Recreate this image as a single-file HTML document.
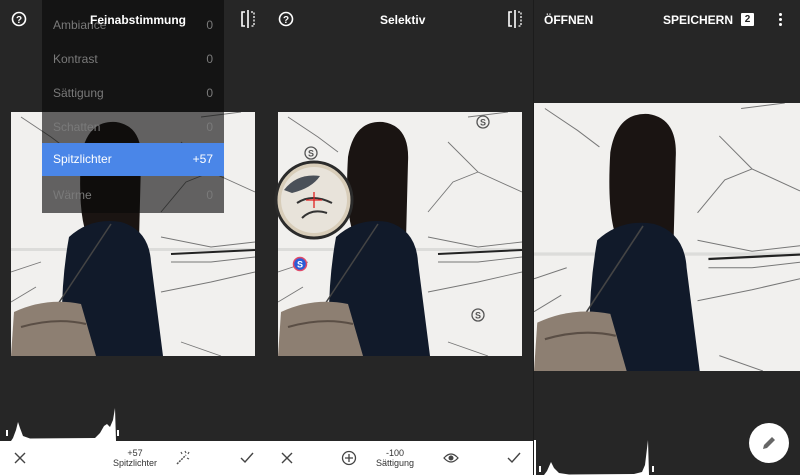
<!DOCTYPE html>
<html><head><meta charset="utf-8"><style>
*{margin:0;padding:0;box-sizing:border-box}
body{width:800px;height:475px;background:#262626;position:relative;overflow:hidden;font-family:"Liberation Sans",sans-serif;color:#fff}
.abs{position:absolute}
.t{font-size:12px;font-weight:bold;}
.menu{left:42px;top:0;width:182px;height:213px;background:rgba(10,10,10,0.62)}
.row{position:absolute;left:11px;right:11px;font-size:12px;color:#7a7a7a;display:flex;justify-content:space-between}
.bar{top:441px;height:34px;background:#fff}
.lbl{font-size:9px;color:#333;text-align:center;line-height:10px}
</style></head><body>

<svg width="0" height="0" style="position:absolute">
<defs>
<g id="photo">
<rect width="244" height="244" fill="#f1f0ee"/>
<rect x="0" y="136" width="244" height="3" fill="#dcdcda"/>
<path d="M10 5 L40 25 L60 40 M170 30 L200 60 L244 80 M150 100 L175 70 L200 60 M150 125 L200 135 L244 130 M160 150 L200 150 L244 145 M150 180 L200 170 L244 160 M170 230 L210 244 M0 160 L30 150 M0 190 L25 175 M190 5 L230 0" stroke="#777" stroke-width="0.9" fill="none"/>
<path d="M160 142 L244 138" stroke="#222" stroke-width="2" fill="none"/>
<path d="M70 45 Q76 8 105 10 Q132 14 130 50 L128 128 Q110 138 80 132 Q66 110 70 45Z" fill="#1a1412"/>
<path d="M58 125 Q80 105 110 110 Q138 118 140 150 L152 244 L52 244 Q48 180 58 125Z" fill="#111a2a"/>
<path d="M100 112 L45 195" stroke="#444" stroke-width="1.5"/>
<path d="M3 200 Q35 185 70 192 L85 244 L0 244Z" fill="#8d7f72"/>
<path d="M10 215 Q45 205 75 212" stroke="#5a4e45" stroke-width="2" fill="none"/>
</g>
<g id="S"><circle r="6" fill="none" stroke="#555" stroke-width="1.3"/><text y="3.5" text-anchor="middle" font-size="9" font-weight="bold" fill="#555" font-family="Liberation Sans">S</text></g>
</defs></svg>

<!-- Panel 1 -->
<svg class="abs" style="left:11px;top:112px" width="244" height="244" viewBox="0 0 244 244"><use href="#photo"/></svg>
<div class="abs menu"></div>
<div class="row" style="top:18px;left:53px;width:160px"><span>Ambiance</span><span>0</span></div>
<div class="row" style="top:52px;left:53px;width:160px"><span>Kontrast</span><span>0</span></div>
<div class="row" style="top:86px;left:53px;width:160px"><span>Sättigung</span><span>0</span></div>
<div class="row" style="top:120px;left:53px;width:160px"><span>Schatten</span><span>0</span></div>
<div class="abs" style="left:42px;top:143px;width:182px;height:33px;background:#4a86e8"></div>
<div class="row" style="top:152px;left:53px;width:160px;color:#fff"><span>Spitzlichter</span><span>+57</span></div>
<div class="row" style="top:188px;left:53px;width:160px"><span>Wärme</span><span>0</span></div>
<div class="abs t" style="left:90px;top:13px">Feinabstimmung</div>
<svg class="abs" style="left:11px;top:11px" width="16" height="16"><circle cx="8" cy="8" r="6.5" fill="none" stroke="#fff" stroke-width="1.6"/><text x="8" y="12" text-anchor="middle" font-size="10" font-weight="bold" fill="#fff" font-family="Liberation Sans">?</text></svg>
<svg class="abs" style="left:240px;top:10px" width="16" height="18"><path d="M5 2H2V16H5M8 0V18" stroke="#fff" stroke-width="1.6" fill="none"/><path d="M11 2H14V16H11" stroke="#fff" stroke-width="1.3" stroke-dasharray="2 1.5" fill="none"/></svg>
<svg class="abs" style="left:0;top:400px" width="266" height="41"><polygon points="11,41 13,38 16,30 18,22 20,28 23,36 30,38.5 95,38 100,33 104,26 107,24 110,27 113,20 115,8 116,41" fill="#fff"/><rect x="6" y="30" width="2" height="6" fill="#fff"/><rect x="117" y="30" width="2" height="6" fill="#fff"/></svg>
<div class="abs bar" style="left:0;width:266px"></div>
<svg class="abs" style="left:14px;top:452px" width="12" height="12"><path d="M1 1L11 11M11 1L1 11" stroke="#444" stroke-width="1.4"/></svg>
<div class="abs lbl" style="left:105px;top:448px;width:60px">+57<br>Spitzlichter</div>
<svg class="abs" style="left:175px;top:450px" width="16" height="16"><path d="M2 14L11 5" stroke="#555" stroke-width="1.5" stroke-dasharray="2 1"/><path d="M10 1L11 3M14 2L13 4M14 9L12 8M6 2L7 4" stroke="#555" stroke-width="1.2"/></svg>
<svg class="abs" style="left:240px;top:452px" width="14" height="12"><path d="M1 6L5 10L13 1" stroke="#444" stroke-width="1.4" fill="none"/></svg>

<!-- Panel 2 -->
<svg class="abs" style="left:278px;top:112px" width="244" height="244" viewBox="0 0 244 244"><use href="#photo"/>
<g transform="translate(205,10)"><use href="#S"/></g>
<g transform="translate(33,41)"><use href="#S"/></g>
<g transform="translate(200,203)"><use href="#S"/></g>
<circle cx="22" cy="152" r="6.5" fill="#2a5bd7" stroke="#e04a6a" stroke-width="1.5"/><text x="22" y="155.5" text-anchor="middle" font-size="9" font-weight="bold" fill="#fff" font-family="Liberation Sans">S</text>
</svg>
<svg class="abs" style="left:272px;top:158px" width="84" height="84"><circle cx="42" cy="42" r="38" fill="#d8cdb9" stroke="#2b2b2b" stroke-width="3"/><circle cx="42" cy="42" r="33" fill="#e8e3da"/><path d="M12 32 Q25 15 48 18 Q40 30 20 35Z" fill="#4a5058"/><path d="M25 45 Q40 35 60 45 M30 60 Q40 50 55 55" stroke="#333" stroke-width="2" fill="none"/><path d="M42 34V50M34 42H50" stroke="#e02020" stroke-width="1.3"/></svg>
<div class="abs t" style="left:380px;top:13px">Selektiv</div>
<svg class="abs" style="left:278px;top:11px" width="16" height="16"><circle cx="8" cy="8" r="6.5" fill="none" stroke="#fff" stroke-width="1.6"/><text x="8" y="12" text-anchor="middle" font-size="10" font-weight="bold" fill="#fff" font-family="Liberation Sans">?</text></svg>
<svg class="abs" style="left:507px;top:10px" width="16" height="18"><path d="M5 2H2V16H5M8 0V18" stroke="#fff" stroke-width="1.6" fill="none"/><path d="M11 2H14V16H11" stroke="#fff" stroke-width="1.3" stroke-dasharray="2 1.5" fill="none"/></svg>
<div class="abs bar" style="left:266px;width:268px"></div>
<svg class="abs" style="left:281px;top:452px" width="12" height="12"><path d="M1 1L11 11M11 1L1 11" stroke="#444" stroke-width="1.4"/></svg>
<svg class="abs" style="left:341px;top:450px" width="16" height="16"><circle cx="8" cy="8" r="6.5" fill="none" stroke="#444" stroke-width="1.3"/><path d="M8 4V12M4 8H12" stroke="#444" stroke-width="1.3"/></svg>
<div class="abs lbl" style="left:365px;top:448px;width:60px">-100<br>Sättigung</div>
<svg class="abs" style="left:443px;top:452px" width="16" height="12"><path d="M1 6Q8 -2 15 6Q8 14 1 6Z" fill="none" stroke="#444" stroke-width="1.3"/><circle cx="8" cy="6" r="2.5" fill="#444"/></svg>
<svg class="abs" style="left:507px;top:452px" width="14" height="12"><path d="M1 6L5 10L13 1" stroke="#444" stroke-width="1.4" fill="none"/></svg>

<!-- Panel 3 -->
<div class="abs" style="left:533px;top:0;width:1px;height:475px;background:#1c1c1c"></div>
<svg class="abs" style="left:534px;top:103px" width="266" height="268" viewBox="0 0 244 244" preserveAspectRatio="none"><use href="#photo"/></svg>
<div class="abs t" style="left:544px;top:13px">ÖFFNEN</div>
<div class="abs t" style="left:663px;top:13px">SPEICHERN</div>
<div class="abs" style="left:741px;top:13px;width:13px;height:13px;background:#fff;color:#222;font-size:10px;font-weight:bold;text-align:center;line-height:13px;border-radius:1px">2</div>
<div class="abs" style="left:779px;top:13px;width:3px;height:3px;background:#fff;border-radius:50%;box-shadow:0 5px 0 #fff,0 10px 0 #fff"></div>
<svg class="abs" style="left:534px;top:425px" width="130" height="50"><polygon points="0,50 0,15 2,15 2,50 10,50 13,46 17,37 20,43 25,48 35,49.5 100,49 108,47 111,40 114,15 115,50" fill="#fff"/><rect x="5" y="41" width="2" height="6" fill="#fff"/><rect x="118" y="41" width="2" height="6" fill="#fff"/></svg>
<div class="abs" style="left:749px;top:423px;width:40px;height:40px;border-radius:50%;background:#fff"></div>
<svg class="abs" style="left:761px;top:435px" width="16" height="16"><path d="M2 14L3 10L11 2L14 5L6 13Z" fill="#666"/></svg>
</body></html>
